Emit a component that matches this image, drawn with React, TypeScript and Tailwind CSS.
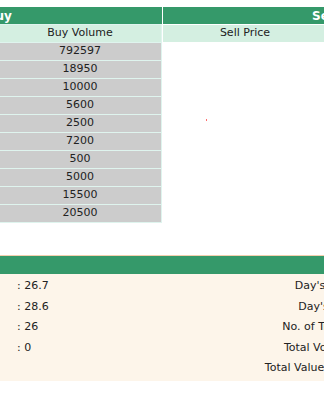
import React from "react";

const buyVolumes = ["792597", "18950", "10000", "5600", "2500", "7200", "500", "5000", "15500", "20500"];

const stats = [
  { v: ": 26.7", l: "Day's High" },
  { v: ": 28.6", l: "Day's Low" },
  { v: ": 26", l: "No. of Trades" },
  { v: ": 0", l: "Total Volume" },
  { v: "", l: "Total Value (mn)" },
];

export default function App() {
  return (
    <div
      className="w-[324px] h-[400px] overflow-hidden bg-white text-[11px] text-[#222222]"
      style={{ fontFamily: '"DejaVu Sans", Verdana, sans-serif' }}
    >
      <div className="flex pt-[7px] gap-px">
        {/* Buy */}
        <div className="ml-[-164px] w-[326px] shrink-0 flex flex-col">
          <div className="h-[17px] bg-[#35996a] text-white font-bold text-[12px] flex items-center justify-center">
            Buy
          </div>
          <div className="flex flex-col gap-px bg-[#dff4ee] pt-px pb-px pr-px">
            <div className="grid grid-cols-[162px_162px] gap-px">
              <div className="h-[17px] bg-[#d4efe1] flex items-center justify-center">Buy Price</div>
              <div className="h-[17px] bg-[#d4efe1] flex items-center justify-center">Buy Volume</div>
            </div>
            {buyVolumes.map((v) => (
              <div key={v} className="grid grid-cols-[162px_162px] gap-px">
                <div className="h-[17px] bg-[#cccccc]" />
                <div className="h-[17px] bg-[#cccccc] flex items-center justify-center">{v}</div>
              </div>
            ))}
          </div>
        </div>
        {/* Sell */}
        <div className="w-[323px] shrink-0 flex flex-col">
          <div className="h-[17px] bg-[#35996a] text-white font-bold text-[12px] flex items-center justify-center">
            Sell
          </div>
          <div className="pt-px grid grid-cols-[164px_158px] gap-px">
            <div className="h-[17px] bg-[#d4efe1] flex items-center justify-center">Sell Price</div>
            <div className="h-[17px] bg-[#d4efe1] flex items-center justify-center">Sell Volume</div>
          </div>
          <div className="relative h-[180px]">
            <div className="absolute left-[43px] top-[77px] w-px h-[2px] bg-[#ff6b6b]" />
          </div>
        </div>
      </div>

      {/* Summary */}
      <div className="mt-[32px] w-[420px] border-t border-[#f3cfae]">
        <div className="h-[18px] bg-[#35996a]" />
        <div className="bg-[#fdf5ea] pt-[2px] pb-[2px] flex flex-col">
          {stats.map((s) => (
            <div key={s.l} className="h-[20.5px] flex items-center text-[11px]">
              <div className="pl-[17px] w-[120px]">{s.v}</div>
              <div className="w-[234px] text-right whitespace-nowrap">{s.l}</div>
            </div>
          ))}
        </div>
      </div>
    </div>
  );
}
